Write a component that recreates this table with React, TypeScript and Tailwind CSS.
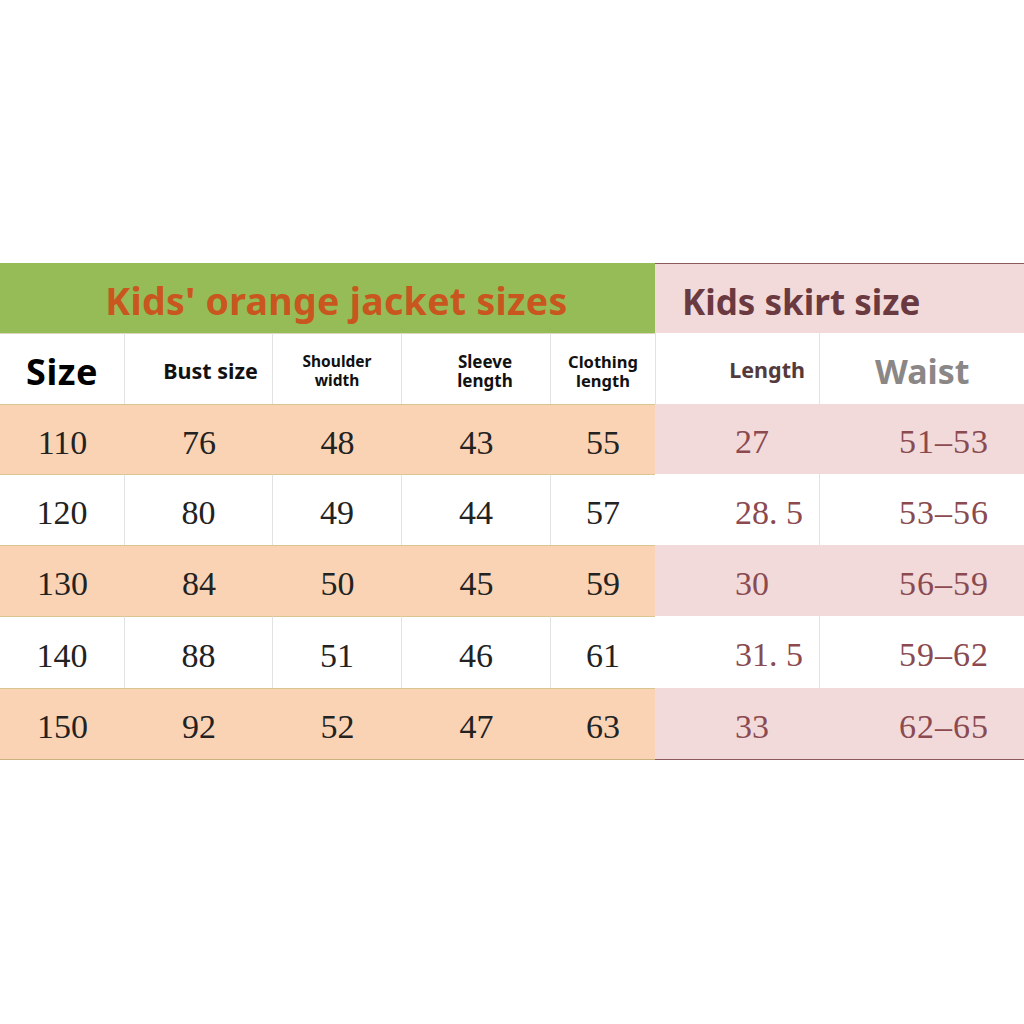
const rows = [
  { size: "110", bust: "76", shoulder: "48", sleeve: "43", cloth: "55", len: "27", waist: "51–53" },
  { size: "120", bust: "80", shoulder: "49", sleeve: "44", cloth: "57", len: "28. 5", waist: "53–56" },
  { size: "130", bust: "84", shoulder: "50", sleeve: "45", cloth: "59", len: "30", waist: "56–59" },
  { size: "140", bust: "88", shoulder: "51", sleeve: "46", cloth: "61", len: "31. 5", waist: "59–62" },
  { size: "150", bust: "92", shoulder: "52", sleeve: "47", cloth: "63", len: "33", waist: "62–65" },
];

const sans = "font-['Noto_Sans','Open_Sans',sans-serif]";
const serif = "font-['Liberation_Serif','DejaVu_Serif',serif]";

export default function App() {
  return (
    <div className="h-[1024px] w-[1024px] bg-white pt-[263px]">
      <div className="grid grid-cols-[125px_148px_129px_149px_104px_165px_204px]">
        {/* title row */}
        <div className={`col-span-5 flex h-[70px] items-center justify-center bg-[#95bc56] pl-[18px] pt-[7px] ${sans}`}>
          <span className="text-[37.5px] font-bold tracking-[0.3px] text-[#c9561f]">Kids' orange jacket sizes</span>
        </div>
        <div className={`col-span-2 flex h-[70px] items-center border-t border-[#8c5a5a] bg-[#f2dadb] pl-[27px] pt-[7px] ${sans}`}>
          <span className="text-[35px] font-bold text-[#6a3a40]">Kids skirt size</span>
        </div>

        {/* column headers */}
        <div className={`flex h-[71px] items-center justify-center border-r border-t border-[#e2e2e2] border-t-[#dcd6c0] pt-[6px] ${sans}`}>
          <span className="text-[36px] font-bold tracking-[0.5px] text-black">Size</span>
        </div>
        <div className={`flex h-[71px] items-center justify-center border-r border-t border-[#e2e2e2] border-t-[#dcd6c0] pl-6 pt-[4px] ${sans}`}>
          <span className="text-[21.5px] font-bold text-[#111]">Bust size</span>
        </div>
        <div className={`flex h-[71px] flex-col items-center justify-center border-r border-t border-[#e2e2e2] border-t-[#dcd6c0] pt-[4px] text-[15.5px] font-bold leading-[19px] text-[#111] ${sans}`}>
          <span>Shoulder</span>
          <span>width</span>
        </div>
        <div className={`flex h-[71px] flex-col items-center justify-center border-r border-t border-[#e2e2e2] border-t-[#dcd6c0] pl-[18px] pt-[4px] text-[17px] font-bold leading-[19px] text-[#111] ${sans}`}>
          <span>Sleeve</span>
          <span>length</span>
        </div>
        <div className={`flex h-[71px] flex-col items-center justify-center border-t border-[#dcd6c0] pt-[4px] text-[16.5px] font-bold leading-[19px] text-[#111] ${sans}`}>
          <span>Clothing</span>
          <span>length</span>
        </div>
        <div className={`flex h-[71px] items-center justify-end border-l border-r border-[#e2e2e2] pr-[14px] pt-[4px] ${sans}`}>
          <span className="text-[21.5px] font-bold text-[#553a3c]">Length</span>
        </div>
        <div className={`flex h-[71px] items-center pl-[55px] pt-[6px] ${sans}`}>
          <span className="text-[34px] font-bold text-[#8b8787]">Waist</span>
        </div>

        {rows.map((r, i) => {
          const odd = i % 2 === 0;
          const last = i === rows.length - 1;
          const left = odd
            ? "bg-[#fad3b4] border-t border-[#d8c58f]"
            : "bg-white border-t border-[#d8c58f] border-r border-r-[#e2e2e2]";
          const right = odd ? "bg-[#f2dadb]" : "bg-white";
          const h = i >= 3 ? "h-[72px]" : i === 0 ? "h-[70px]" : "h-[71px]";
          const bottomL = last ? "border-b border-b-[#c9b27c]" : "";
          const bottomR = last ? "border-b border-b-[#8c5a5a]" : "";
          const num = `text-[34px] text-[#222] ${serif}`;
          return (
            <div key={r.size} className="contents">
              <div className={`flex ${h} items-center justify-center pt-[5px] ${left} ${bottomL}`}>
                <span className={num}>{r.size}</span>
              </div>
              <div className={`flex ${h} items-center justify-center pt-[5px] ${left} ${bottomL}`}>
                <span className={num}>{r.bust}</span>
              </div>
              <div className={`flex ${h} items-center justify-center pt-[5px] ${left} ${bottomL}`}>
                <span className={num}>{r.shoulder}</span>
              </div>
              <div className={`flex ${h} items-center justify-center pt-[5px] ${left} ${bottomL}`}>
                <span className={num}>{r.sleeve}</span>
              </div>
              <div className={`flex ${h} items-center justify-center pt-[5px] ${odd ? "bg-[#fad3b4]" : "bg-white"} border-t border-[#d8c58f] ${bottomL}`}>
                <span className={num}>{r.cloth}</span>
              </div>
              <div className={`flex ${h} items-center pl-[80px] pt-[5px] ${right} ${odd ? "" : "border-r border-[#e2e2e2]"} ${bottomR}`}>
                <span className={`text-[34px] text-[#8a4a50] ${serif}`}>{r.len}</span>
              </div>
              <div className={`flex ${h} items-center pl-[79px] pt-[5px] ${right} ${bottomR}`}>
                <span className={`text-[34px] tracking-[1px] text-[#8a4a50] ${serif}`}>{r.waist}</span>
              </div>
            </div>
          );
        })}
      </div>
    </div>
  );
}
